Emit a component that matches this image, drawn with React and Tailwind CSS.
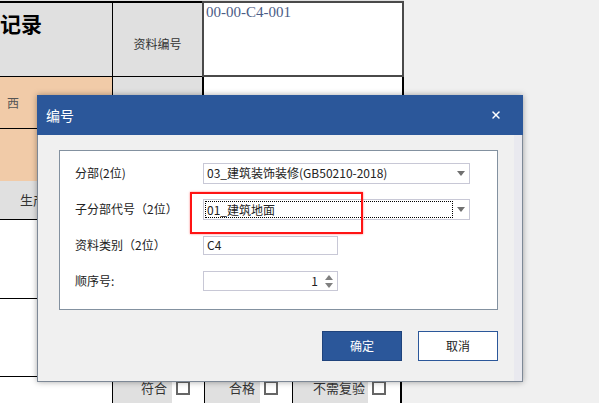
import { X } from 'lucide-react';

const Caret = () => (
  <svg width="8" height="5" viewBox="0 0 8 5" className="shrink-0">
    <path d="M0 0h8L4 5z" fill="#707070" />
  </svg>
);

const Checkbox = () => (
  <div className="flex h-full w-[32px] items-start justify-start bg-white pl-[4px] pt-[4px]">
    <div className="h-[14px] w-[14px] border-2 border-[#666]" />
  </div>
);

const Row = ({ label, children, className = '' }) => (
  <div className={`flex h-[20px] items-center ${className}`}>
    <div className="w-[128px] text-[12px] text-[#222]">{label}</div>
    {children}
  </div>
);

const App = () => {
  return (
    <div className="relative h-[403px] w-[599px] overflow-hidden bg-[#f0f0f0] font-['Noto_Sans_CJK_SC',sans-serif]">
      {/* sheet behind */}
      <div className="flex w-[404px] flex-col">
        <div className="h-px bg-[#e0e0e0]" />
        <div className="flex h-[76px]">
          <div className="w-[113px] overflow-hidden border-t-2 border-r border-b border-black bg-[#e0e0e0] pt-[10px]">
            <span className="block whitespace-nowrap text-[21px] font-bold leading-none text-black">记录</span>
          </div>
          <div className="flex w-[89px] items-center justify-center border-t-2 border-b border-black bg-[#e0e0e0] pt-[8px] text-[12px] text-[#333]">
            资料编号
          </div>
          <div className="w-[202px] border-2 border-[#4a4a4a] bg-white pl-[2px] pt-[1px] font-['Liberation_Serif',serif] text-[15px] leading-[17px] text-[#4b5c86]">
            00-00-C4-001
          </div>
        </div>
        <div className="flex h-[52px]">
          <div className="w-[113px] overflow-hidden border-r border-b border-black bg-[#f1cba8] pl-[7px] pt-[17px]">
            <span className="block whitespace-nowrap text-[12px] text-[#555]">西</span>
          </div>
          <div className="w-[89px] bg-[#e0e0e0]" />
          <div className="w-[202px] border-x-2 border-black bg-white" />
        </div>
        <div className="flex h-[52px]">
          <div className="w-[113px] border-r border-black bg-[#f1cba8]" />
        </div>
        <div className="flex h-[39px]">
          <div className="flex w-[113px] items-center border-r border-b border-black bg-[#e0e0e0] pl-[20px] text-[13px] text-[#333]">
            生产日期
          </div>
        </div>
        <div className="h-[79px] w-[113px] border-b border-black bg-white" />
        <div className="h-[78px] w-[113px] border-b border-black bg-white" />
        <div className="flex h-[28px]">
          <div className="w-[112px] bg-white" />
          <div className="flex w-[92px] items-start justify-end border-l border-black bg-[#e0e0e0]">
            <span className="pt-[1px] pr-[5px] text-[13px] text-[#333]">符合</span>
            <Checkbox />
          </div>
          <div className="flex w-[88px] items-start justify-end border-l border-black bg-[#e0e0e0]">
            <span className="pt-[1px] pr-[5px] text-[13px] text-[#333]">合格</span>
            <Checkbox />
          </div>
          <div className="flex w-[110px] items-start justify-end border-x-2 border-l border-black bg-[#e0e0e0]">
            <span className="pt-[1px] pr-[3px] text-[13px] text-[#333]">不需复验</span>
            <Checkbox />
          </div>
        </div>
      </div>

      {/* dialog */}
      <div className="absolute left-[37px] top-[95px] flex h-[287px] w-[486px] flex-col shadow-[0_0_6px_rgba(0,0,0,0.35)]">
        <div className="flex h-[40px] items-center justify-between bg-[#2b579a] pl-[9px] pr-[21px]">
          <span className="text-[14px] text-white">编号</span>
          <X size={12} strokeWidth={3} color="#fff" />
        </div>
        <div className="flex flex-1 border-x border-b border-[#7d8896] bg-[#f0f0f0]">
          <div className="flex flex-1 flex-col pl-[21px] pt-[15px]">
            <div className="relative h-[160px] w-[439px] border border-[#8391a0] bg-white pl-[15px] pt-[12px]">
              <Row label="分部(2位)">
                <div className="flex h-[21px] w-[267px] items-center justify-between border border-[#c8c8d6] pl-[3px] pr-[4px] text-[12px] text-[#222]">
                  <span>03_建筑装饰装修(GB50210-2018)</span>
                  <Caret />
                </div>
              </Row>
              <Row label="子分部代号（2位）" className="mt-[16px]">
                <div className="flex h-[21px] w-[267px] items-center justify-between border border-[#c8c8d6] pl-[1px] pr-[4px] text-[12px] text-[#222]">
                  <span className="h-[17px] w-[248px] border border-dotted border-black pl-[1px] leading-[15px]">01_建筑地面</span>
                  <Caret />
                </div>
              </Row>
              <Row label="资料类别（2位）" className="mt-[16px]">
                <div className="flex h-[19px] w-[135px] items-center border border-[#c8c8d6] pl-[3px] text-[12px] text-[#222]">
                  C4
                </div>
              </Row>
              <Row label="顺序号:" className="mt-[16px]">
                <div className="flex h-[20px] w-[135px] items-center justify-end gap-[7px] border border-[#c8c8d6] pr-[4px] text-[12px] text-[#222]">
                  <span>1</span>
                  <div className="flex flex-col gap-[3px]">
                    <svg width="8" height="5" viewBox="0 0 8 5"><path d="M0 5h8L4 0z" fill="#808080" /></svg>
                    <svg width="8" height="5" viewBox="0 0 8 5"><path d="M0 0h8L4 5z" fill="#808080" /></svg>
                  </div>
                </div>
              </Row>
              <div className="absolute left-[130px] top-[41px] h-[42px] w-[173px] border-2 border-[#ff1414] shadow-[0_0_2px_rgba(255,0,0,0.5)]" />
            </div>
            <div className="mt-[21px] flex w-[439px] justify-end gap-[16px]">
              <button className="h-[30px] w-[80px] border border-[#1f437c] bg-[#2b579a] text-[12px] text-white">确定</button>
              <button className="h-[30px] w-[80px] border border-[#2b579a] bg-white text-[12px] text-[#222]">取消</button>
            </div>
          </div>
          <div className="w-[8px] bg-[#e9e9ef]" />
        </div>
      </div>
    </div>
  );
};

export default App;
